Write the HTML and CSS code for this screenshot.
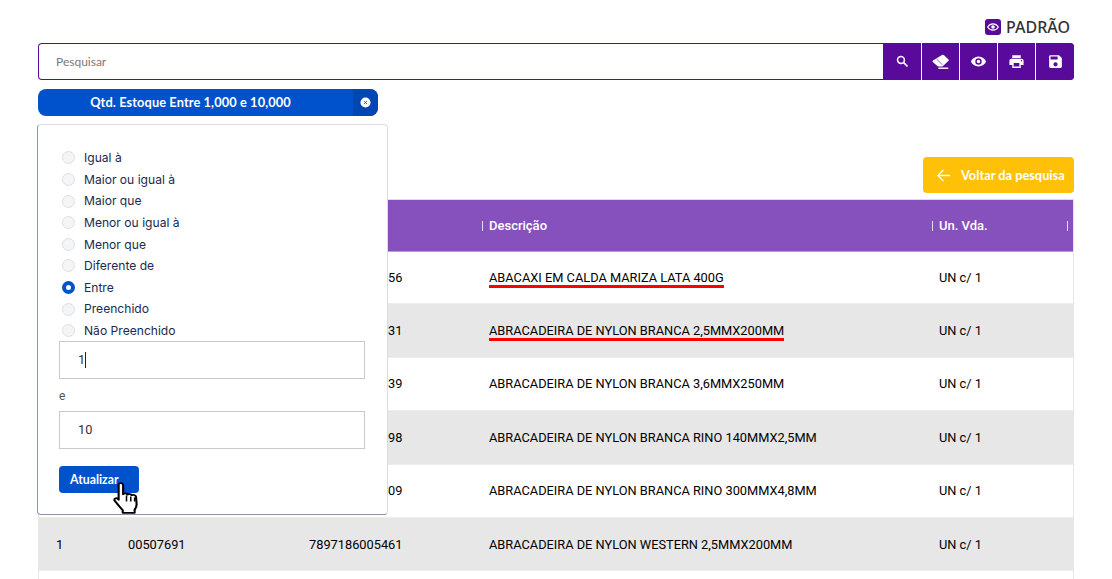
FILE: index.html
```html
<!DOCTYPE html>
<html lang="pt">
<head>
<meta charset="utf-8">
<title>Pesquisa</title>
<link rel="stylesheet" href="styles.css">
</head>
<body>
<div class="page">
  <header class="profile">
    <svg class="profile-icon" viewBox="0 0 16 16"><rect width="16" height="16" rx="3" fill="#5a0a9b"/><path d="M2.600 8C4 5.900 5.900 4.900 8 4.900s4 1 5.400 3.100C12 10.100 10.100 11.100 8 11.100S4 10.100 2.600 8z" fill="none" stroke="#fff" stroke-width="1.100"/><circle cx="8" cy="8" r="1.800" fill="#fff"/></svg>
    <span>PADRÃO</span>
  </header>
  <div class="search">
    <div class="search-input">Pesquisar</div>
    <button class="tool first"><svg viewBox="0 0 24 24"><circle cx="9.500" cy="9.500" r="5.500" fill="none" stroke="#fff" stroke-width="2.400"/><path d="M13.500 13.500 20 20" stroke="#fff" stroke-width="2.800"/></svg></button>
    <button class="tool"><svg class="big" viewBox="0 0 24 24"><path d="M13.500 3.200a2.500 2.500 0 0 1 3.500 0l6 5.600a1.800 1.800 0 0 1 0 2.600l-8.200 7.800H8.500L1.400 13.200a1.800 1.800 0 0 1 0-2.600L13.500 3.200z"/><path d="M6.500 8.500 15 17" stroke="#5a0a9b" stroke-width=".9" fill="none"/><rect x="9" y="20.500" width="14" height="2"/></svg></button>
    <button class="tool"><svg class="big" viewBox="0 0 24 24"><path d="M12 5C7 5 3 8 1.200 12 3 16 7 19 12 19s9-3 10.800-7C21 8 17 5 12 5zm0 11.500a4.500 4.500 0 1 1 0-9 4.500 4.500 0 0 1 0 9zm0-7a2.500 2.500 0 1 0 0 5 2.500 2.500 0 0 0 0-5z"/></svg></button>
    <button class="tool"><svg class="big" viewBox="0 0 24 24"><path d="M19 8H5a3 3 0 0 0-3 3v6h4v4h12v-4h4v-6a3 3 0 0 0-3-3zm-3 11H8v-5h8v5zm3-7a1 1 0 1 1 0-2 1 1 0 0 1 0 2zM18 3H6v4h12V3z"/></svg></button>
    <button class="tool last"><svg class="big" viewBox="0 0 24 24"><path d="M17 3H5a2 2 0 0 0-2 2v14a2 2 0 0 0 2 2h14a2 2 0 0 0 2-2V7l-4-4zm-5 16a3 3 0 1 1 0-6 3 3 0 0 1 0 6zm3-10H5V5h10v4z"/></svg></button>
  </div>
  <div class="chip">
    <span class="chip-label">Qtd. Estoque Entre 1,000 e 10,000</span>
    <span class="chip-close"><svg viewBox="0 0 12 12"><circle cx="6" cy="6" r="5.500" fill="#fff"/><path d="M4.300 4.300l3.400 3.400M7.700 4.300 4.300 7.700" stroke="#0052cc" stroke-width=".9"/></svg></span>
  </div>
  <div class="actions">
    <button class="back">
      <svg viewBox="0 0 16 16"><path d="M15 8H2M8 2 2 8l6 6" fill="none" stroke="#fff" stroke-width="1.500"/></svg>
      <span>Voltar da pesquisa</span>
    </button>
  </div>
  <div class="table">
    <div class="row head"><span></span><span></span><span></span><span class="sep">Descrição</span><span class="sep last">Un. Vda.</span></div>
    <div class="row first-row"><span>1</span><span>00507686</span><span>7897186005456</span><span class="mark">ABACAXI EM CALDA MARIZA LATA 400G</span><span>UN c/ 1</span></div>
    <div class="row alt"><span>1</span><span>00507687</span><span>7897186005431</span><span class="mark">ABRACADEIRA DE NYLON BRANCA 2,5MMX200MM</span><span>UN c/ 1</span></div>
    <div class="row"><span>1</span><span>00507688</span><span>7897186005439</span><span>ABRACADEIRA DE NYLON BRANCA 3,6MMX250MM</span><span>UN c/ 1</span></div>
    <div class="row alt"><span>1</span><span>00507689</span><span>7897186005398</span><span>ABRACADEIRA DE NYLON BRANCA RINO 140MMX2,5MM</span><span>UN c/ 1</span></div>
    <div class="row"><span>1</span><span>00507690</span><span>7897186005409</span><span>ABRACADEIRA DE NYLON BRANCA RINO 300MMX4,8MM</span><span>UN c/ 1</span></div>
    <div class="row alt"><span>1</span><span>00507691</span><span>7897186005461</span><span>ABRACADEIRA DE NYLON WESTERN 2,5MMX200MM</span><span>UN c/ 1</span></div>
    <div class="row"></div>
  </div>
  <div class="popover">
    <ul class="options">
      <li><i class="radio"></i>Igual à</li>
      <li><i class="radio"></i>Maior ou igual à</li>
      <li><i class="radio"></i>Maior que</li>
      <li><i class="radio"></i>Menor ou igual à</li>
      <li><i class="radio"></i>Menor que</li>
      <li><i class="radio"></i>Diferente de</li>
      <li><i class="radio on"></i>Entre</li>
      <li><i class="radio"></i>Preenchido</li>
      <li><i class="radio"></i>Não Preenchido</li>
    </ul>
    <div class="field">1<b class="caret"></b></div>
    <div class="and">e</div>
    <div class="field">10</div>
    <button class="update">Atualizar</button>
    <svg class="hand" viewBox="1 1 20 31" preserveAspectRatio="none"><path d="M7 2c1.300 0 2.100.9 2.100 2.100v8.800c.6-1.100 3-1.100 3.500.3.700-.9 2.900-.8 3.300.6 1-.7 3.300-.3 3.500 1.600l.5 7.100c0 2.500-.6 3.800-1.600 5.400v3H8.800v-2.600c-1.900-2.500-4.300-6-6.400-9.200-.9-1.500.8-3.100 2.200-2l.9 1.100V4.100C5.500 2.900 5.800 2 7 2z" fill="#fff" stroke="#000" stroke-width="1.700" stroke-linejoin="round"/><path d="M11.800 14v6M15.200 15v5M18.300 16v4" stroke="#000" stroke-width="1.200"/></svg>
  </div>
</div>
</body>
</html>
```
FILE: styles.css
```css
* { box-sizing: border-box; }
html, body { margin: 0; height: 579px; overflow: hidden; background: #fff; }
body { font-family: Roboto, sans-serif; color: #000; }
.page { position: relative; padding: 17px 38px 0; height: 579px; overflow: hidden; }
button { border: 0; font: inherit; padding: 0; cursor: pointer; }

.profile { display: flex; justify-content: flex-end; align-items: center; gap: 5px; height: 20px; padding-right: 4px; margin-bottom: 6px;
  font: 500 16px "Noto Sans", sans-serif; color: #333; }
.profile-icon { width: 16px; height: 16px; }

.search { display: flex; height: 37px; border-radius: 4px; background: #5a0a9b; overflow: hidden; }
.search-input { flex: 1; background: #fff; margin: 1px 0 1px 1px; border-radius: 3px 0 0 3px; padding: 0 17px; font: 12px/35px Lato, sans-serif; color: #7a7a7a; }
.tool { width: 38px; background: #5a0a9b; border-left: 1px solid #fff; display: flex; align-items: center; justify-content: center; }
.tool.first { border-left: 0; }
.tool.last { width: 39px; }
.tool svg { width: 15px; height: 15px; fill: #fff; }
.tool svg.big { width: 17px; height: 17px; }

.chip { display: flex; width: 340px; height: 27px; margin-top: 9px; border-radius: 8px; background: #0052cc; overflow: hidden; color: #fff; }
.chip-label { flex: 1; text-align: center; font: 700 12.800px/26px Lato, sans-serif; letter-spacing: .1px; padding-right: 10px; }
.chip-close { width: 25px; background: #0047b3; display: flex; align-items: center; justify-content: center; }
.chip-close svg { width: 11px; height: 11px; }

.actions { display: flex; justify-content: flex-end; margin-top: 41px; }
.back { width: 151px; height: 36px; border-radius: 4px; background: #ffc107; color: #fff; display: flex; align-items: center; gap: 10px; padding-left: 13px; font: 700 12.800px Lato, sans-serif; }
.back svg { width: 15px; height: 15px; }

.table { margin-top: 6px; border-top: 1px solid #ddd; border-left: 1px solid #e6e6e6; border-right: 1px solid #e6e6e6; width: 1036px; }
.row { display: grid; grid-template-columns: 72px 180px 180px 450px 1fr; height: 53.400px; align-items: center; padding-left: 17px; font-size: 12.800px; border-bottom: 1px solid #eee; }
.row > :nth-child(n+3) { margin-left: 1px; }
.row.alt { background: #e7e7e7; }
.row.first-row { height: 52.400px; }
.row.head { height: 52px; background: #8751bd; color: #fff; font-weight: 500; font-size: 13px; border-bottom: 1px solid #b89ad8; }
.sep { position: relative; }
.sep::before { content: ""; position: absolute; left: -7px; top: 3px; width: 1px; height: 10px; background: #e6d9f2; }
.sep.last::after { content: ""; position: absolute; right: 5px; top: 3px; width: 1px; height: 10px; background: #e6d9f2; }
.mark { justify-self: start; line-height: 15px; border-bottom: 3px solid #f00; margin-top: 3px; }

.popover { position: absolute; left: 37px; top: 124px; width: 351px; height: 391px; background: #fff; border: 1px solid #d9dce3; border-left-color: #8d96a8; border-bottom-color: #8d96a8; border-radius: 4px; padding: 22px 22px 0 21px; }
.options { list-style: none; margin: 0 0 -1px; padding: 0; font: 12.100px/21.640px Inter, sans-serif; color: #1b2a4e; }
.options li { display: flex; align-items: center; gap: 9px; margin-left: 3px; height: 21.640px; }
.radio { width: 13px; height: 13px; border-radius: 50%; background: #f4f5f7; border: 1px solid #dcdfe4; }
.radio.on { background: #fff; border: 4px solid #0052cc; }
.field { height: 38px; border: 1px solid #c9c9c9; padding-left: 18px; font: 12.800px/36px Roboto, sans-serif; color: #333; display: flex; align-items: center; }
.caret { display: block; width: 1px; height: 16px; background: #222; }
.and { font: 12px/35px Roboto, sans-serif; color: #555; height: 32px; }
.update { display: block; margin-top: 17px; width: 80px; height: 27px; border-radius: 4px; background: #0052cc; color: #fff; font: 700 12.300px Lato, sans-serif; text-align: left; padding-left: 11px; }
.hand { position: absolute; left: 75px; top: 357px; width: 25px; height: 32px; }
```
